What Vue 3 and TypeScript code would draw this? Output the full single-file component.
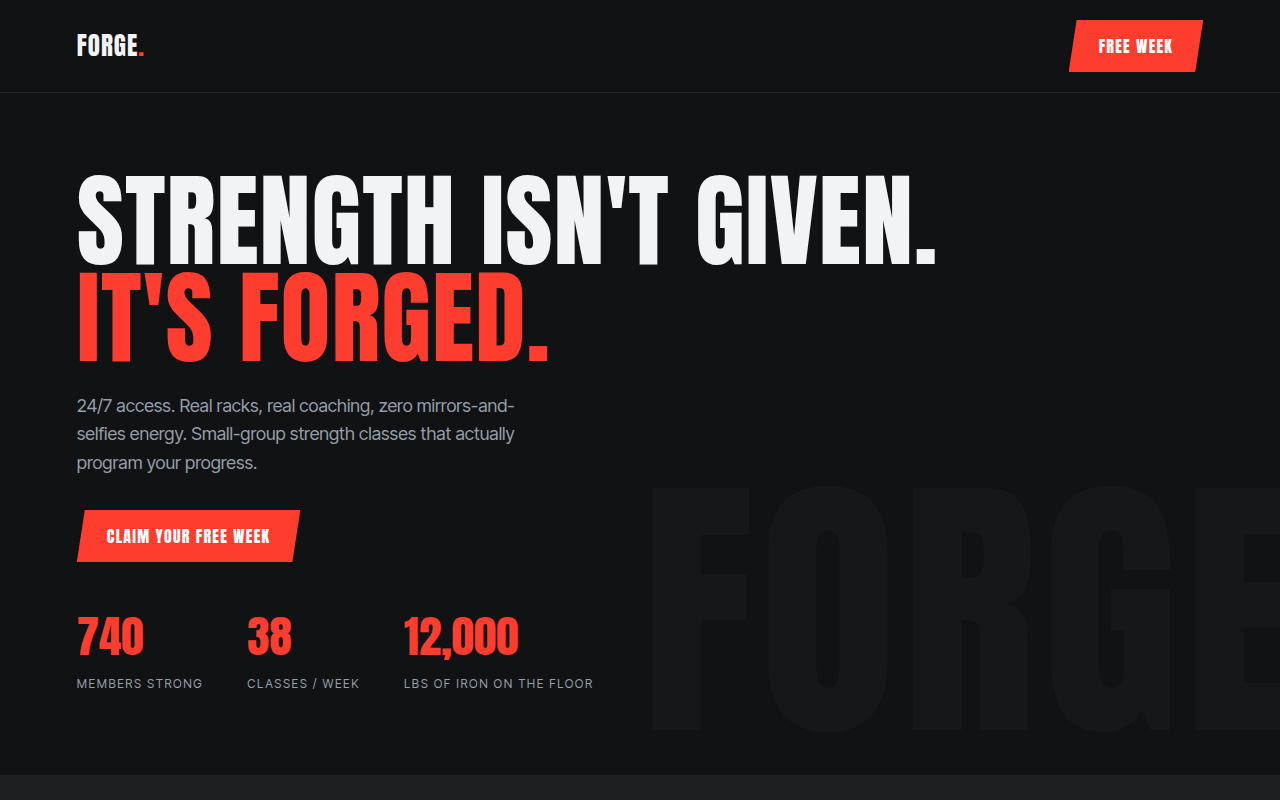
<script setup lang="ts">
interface Stat {
  value: string
  label: string
}

const stats: Stat[] = [
  { value: '740', label: 'Members strong' },
  { value: '38', label: 'Classes / week' },
  { value: '12,000', label: 'Lbs of iron on the floor' },
]
</script>

<template>
  <div class="page">
    <header class="bar">
      <a class="logo" href="#">FORGE<span class="dot">.</span></a>
      <a class="cta" href="#join">Free week</a>
    </header>
    <main>
      <section class="hero">
        <div class="ghost" aria-hidden="true">FORGE</div>
        <h1>Strength isn't given.<br /><span class="accent">It's forged.</span></h1>
        <p class="lead">
          24/7 access. Real racks, real coaching, zero mirrors-and-selfies energy. Small-group
          strength classes that actually program your progress.
        </p>
        <a class="cta" href="#join">Claim your free week</a>
        <dl class="stats">
          <div v-for="stat in stats" :key="stat.label" class="stat">
            <dt>{{ stat.label }}</dt>
            <dd>{{ stat.value }}</dd>
          </div>
        </dl>
      </section>
      <section class="next"></section>
    </main>
  </div>
</template>

<style>
body {
  margin: 0;
  background: #111214;
}
</style>

<style scoped>
.page {
  --display: Anton, Impact, "Liberation Sans Narrow", sans-serif;
  --red: #ff3d2e;
  --muted: #949faa;
  display: flex;
  flex-direction: column;
  min-height: 100vh;
  color: #f2f3f5;
  font-family: "Inter Tight", Inter, "Liberation Sans", sans-serif;
  font-size: 16px;
  line-height: 24px;
}

.bar {
  display: flex;
  align-items: center;
  justify-content: space-between;
  padding: 20px 6vw;
  border-bottom: 1px solid #292a2c;
}

.logo {
  color: inherit;
  font-family: var(--display);
  font-size: 25px;
  line-height: 40px;
  letter-spacing: 1px;
  text-decoration: none;
}

.dot,
.accent {
  color: var(--red);
}

.cta {
  display: inline-block;
  padding: 14px 30px;
  background: var(--red);
  clip-path: polygon(8px 0, 100% 0, calc(100% - 8px) 100%, 0 100%);
  color: #fff;
  font-family: var(--display);
  font-size: 16px;
  line-height: 24px;
  letter-spacing: 0.08em;
  text-decoration: none;
  text-transform: uppercase;
}

main {
  display: flex;
  flex: 1;
  flex-direction: column;
}

.hero {
  position: relative;
  overflow: hidden;
  padding: 80px 6vw;
}

.hero > :not(.ghost) {
  position: relative;
}

.ghost {
  position: absolute;
  right: -2vw;
  bottom: 22px;
  color: #161719;
  font-family: var(--display);
  font-size: 22vw;
  line-height: 1;
  letter-spacing: 0.02em;
}

h1 {
  margin: 0 0 24px;
  font-family: var(--display);
  font-size: 8vw;
  font-weight: 400;
  line-height: 0.95;
  letter-spacing: 0.01em;
  text-transform: uppercase;
}

.lead {
  max-width: 460px;
  margin: 0 0 32px;
  color: var(--muted);
  font-size: 18px;
  line-height: 1.6;
}

.stats {
  display: flex;
  flex-wrap: wrap;
  gap: 44px;
  margin: 52px 0 0;
}

.stat {
  display: flex;
  flex-direction: column-reverse;
  gap: 14px;
}

dt {
  color: var(--muted);
  font-size: 12px;
  line-height: 22px;
  letter-spacing: 0.13em;
  text-transform: uppercase;
}

dd {
  margin: 0;
  color: var(--red);
  font-family: var(--display);
  font-size: 45px;
  line-height: 45px;
}

.next {
  flex: 1;
  background: #1d1e22;
}
</style>
